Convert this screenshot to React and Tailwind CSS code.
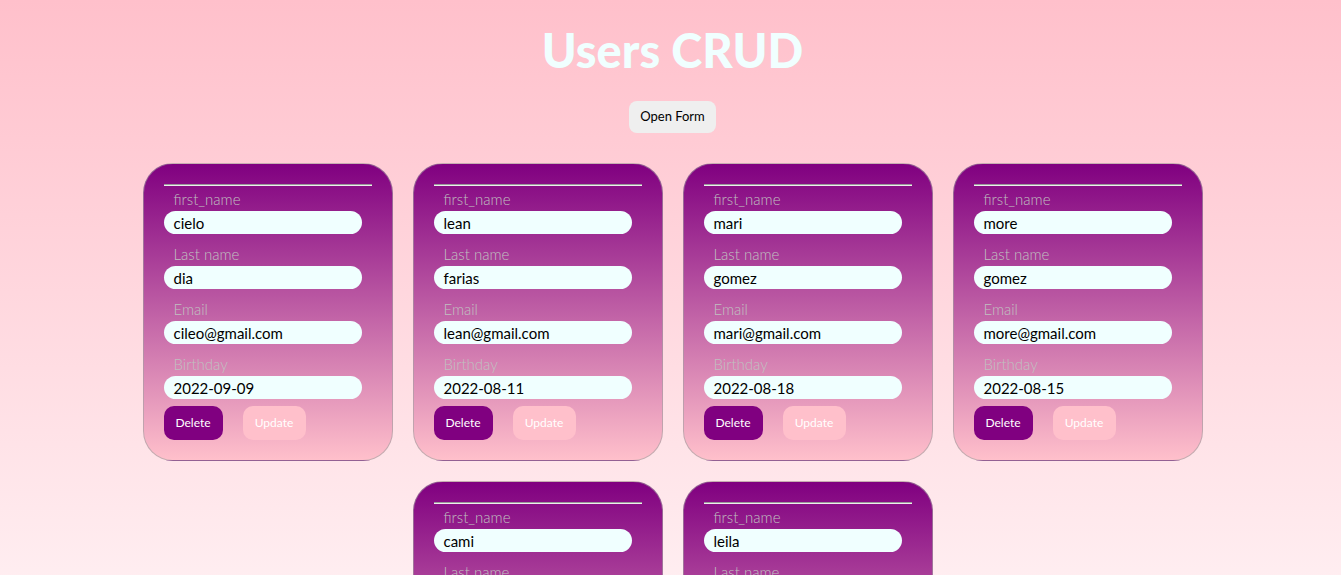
const users = [
  { id: 1, first: "cielo", last: "dia", email: "cileo@gmail.com", birthday: "2022-09-09" },
  { id: 2, first: "lean", last: "farias", email: "lean@gmail.com", birthday: "2022-08-11" },
  { id: 3, first: "mari", last: "gomez", email: "mari@gmail.com", birthday: "2022-08-18" },
  { id: 4, first: "more", last: "gomez", email: "more@gmail.com", birthday: "2022-08-15" },
  { id: 5, first: "cami", last: "gomez", email: "cami@gmail.com", birthday: "2022-08-12" },
  { id: 6, first: "leila", last: "diaz", email: "leila@gmail.com", birthday: "2022-08-20" },
];

function Field({ label, value }) {
  return (
    <div>
      <dt className="h-6 pl-2.5 font-light leading-6 text-[#c0c0c0]">{label}</dt>
      <dd className="mr-2.5 h-[23px] rounded-full bg-[#f0ffff] px-2.5 leading-6 text-black">{value}</dd>
    </div>
  );
}

function UserCard({ user }) {
  return (
    <article className="w-[250px] rounded-[30px] border border-[#a0a0a0]/60 bg-linear-to-b/srgb from-[#800080] to-[#ffc0cb] p-5">
      <hr className="h-0.5 border-t border-b border-t-[#9a9a9a] border-b-[#eeeeee]" />
      <dl className="flex flex-col gap-2 pt-px text-[15px]">
        <Field label="first_name" value={user.first} />
        <Field label="Last name" value={user.last} />
        <Field label="Email" value={user.email} />
        <Field label="Birthday" value={user.birthday} />
      </dl>
      <div className="mt-[7px] flex gap-5 text-xs text-white">
        <button type="button" className="h-[34px] w-[59px] rounded-[10px] bg-[#800080]">Delete</button>
        <button type="button" className="h-[34px] w-[63px] rounded-[10px] bg-[#ffc0cb]">Update</button>
      </div>
    </article>
  );
}

export default function App() {
  return (
    <main className="flex flex-col items-center bg-linear-to-b/srgb from-[#ffc0cb] to-white pb-5 pl-1 pt-5 font-['Gill_Sans','Gill_Sans_MT',Lato,sans-serif]">
      <h1 className="text-[47px] font-black leading-[60px] text-[#f0ffff]">Users CRUD</h1>
      <button type="button" className="mt-[21px] h-8 w-[87px] rounded-lg bg-[#efefef] text-[13px] text-black">
        Open Form
      </button>
      <section className="mt-[30px] flex max-w-[1100px] flex-wrap justify-center gap-5">
        {users.map((user) => (
          <UserCard key={user.id} user={user} />
        ))}
      </section>
    </main>
  );
}
